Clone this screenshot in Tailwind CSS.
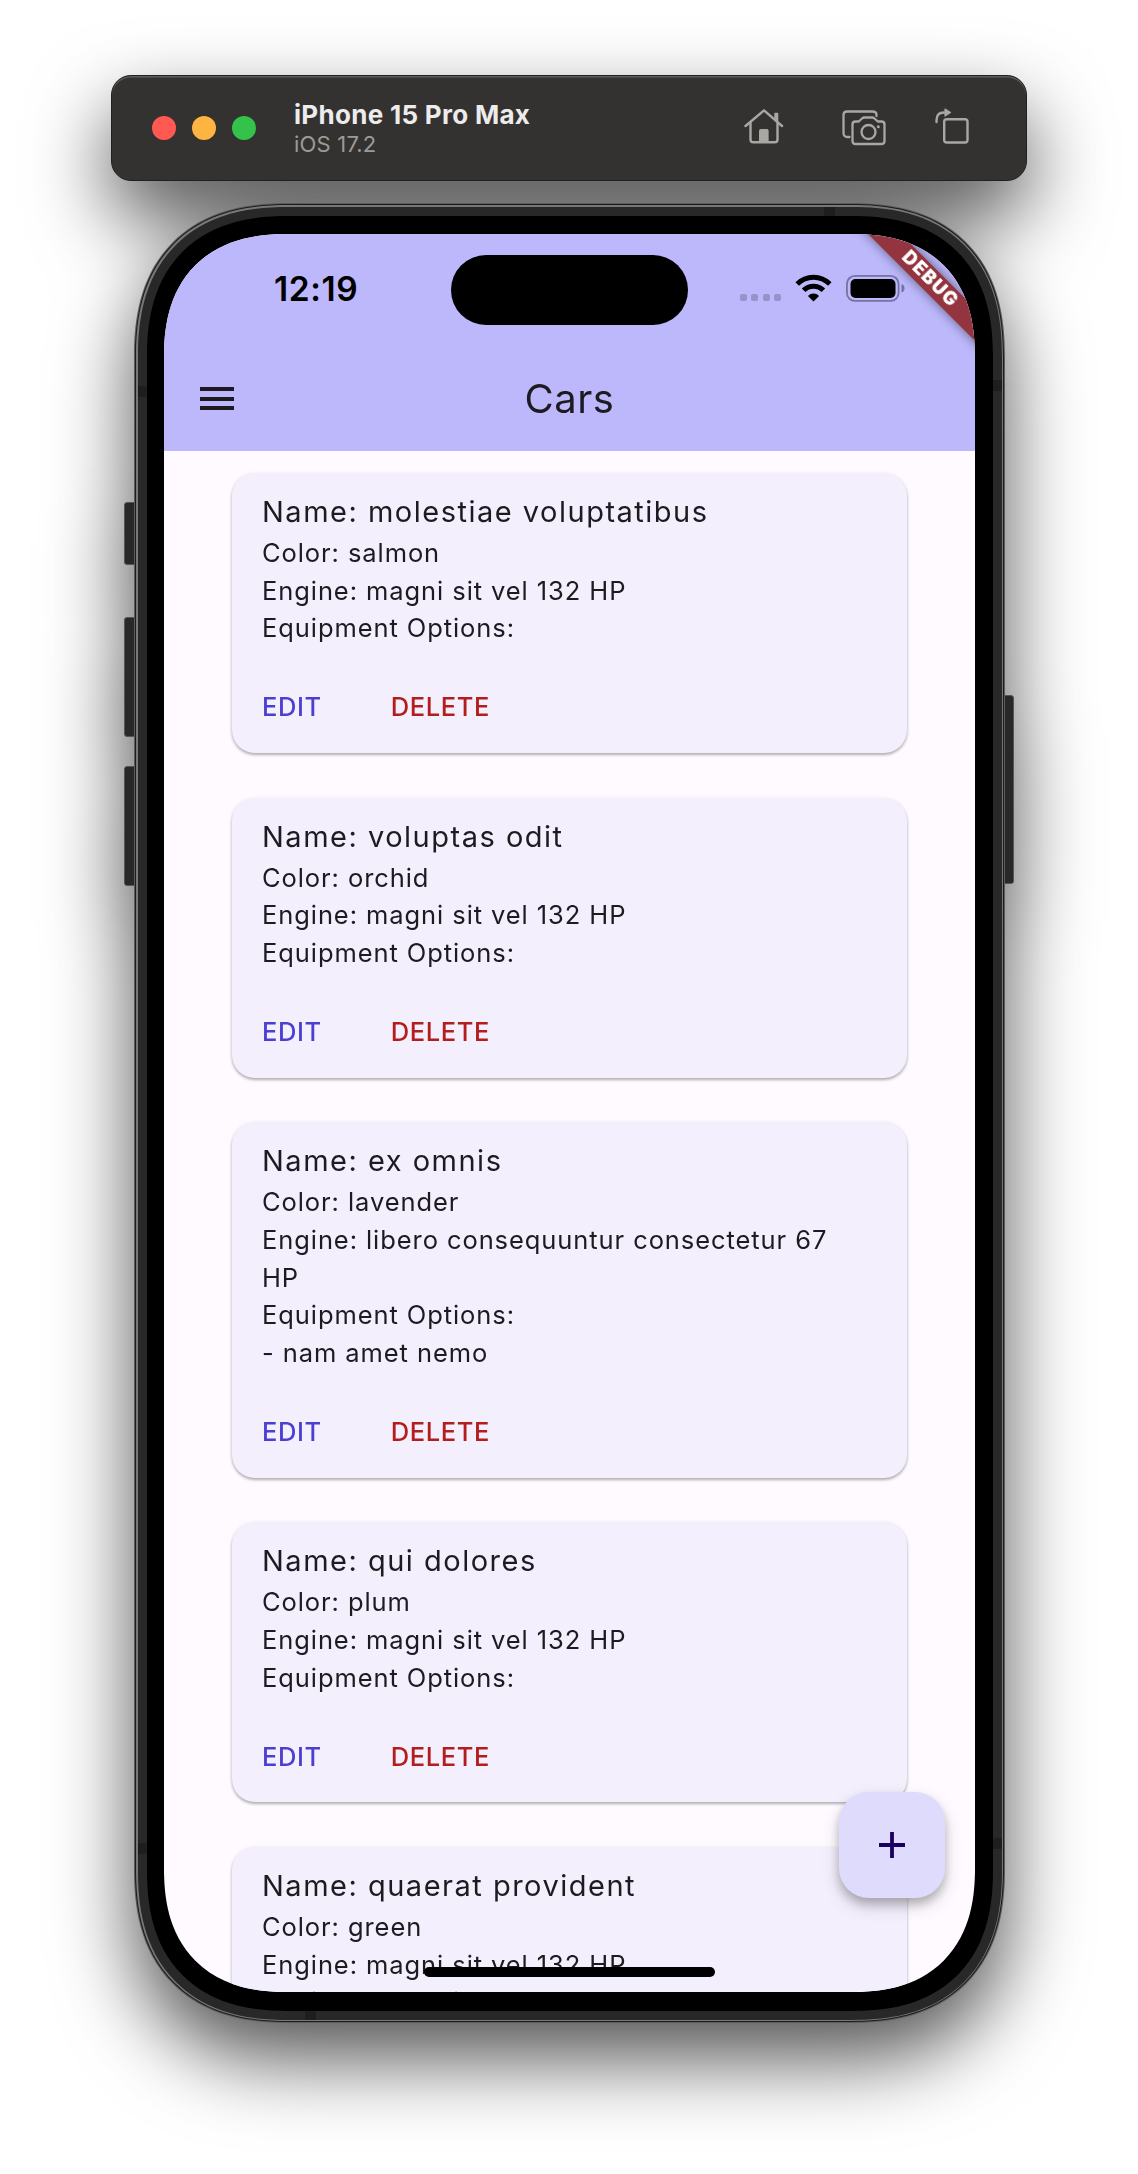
<!DOCTYPE html>
<html lang="en">
<head>
<meta charset="utf-8">
<title>Cars</title>
<script src="https://cdn.jsdelivr.net/npm/@tailwindcss/browser@4"></script>
</head>
<body class="bg-white font-['Inter',sans-serif] overflow-hidden">
<div class="flex h-[2174px] w-[1138px] flex-col items-center pt-[75px] drop-shadow-[0_36px_40px_rgba(0,0,0,0.67)]">
  <!-- Simulator toolbar -->
  <header class="flex h-[106px] w-[916px] shrink-0 items-center rounded-[20px] border border-[#20201f] bg-[#343230] pl-10 pr-[56px] shadow-[inset_0_1.5px_0_#5e5d5b]">
    <div class="flex gap-4">
      <span class="size-6 rounded-full bg-[#ff5951]"></span>
      <span class="size-6 rounded-full bg-[#fdb441]"></span>
      <span class="size-6 rounded-full bg-[#34c34a]"></span>
    </div>
    <div class="ml-[38px] mt-px">
      <div class="text-[26px] leading-[30px] font-bold tracking-[0.3px] text-[#ececec]">iPhone 15 Pro Max</div>
      <div class="text-[22px] leading-[28px] tracking-[0.2px] text-[#9c9a98]">iOS 17.2</div>
    </div>
    <div class="ml-auto flex -translate-y-px items-center text-[#a9a7a4]">
      <svg class="h-10 w-10" viewBox="0 0 40 40" fill="none" stroke="currentColor" stroke-width="2.4" stroke-linecap="round" stroke-linejoin="round"><path d="M1.5 19 20 3.4 38 19"/><path d="M6.5 16v16.5q0 2.8 2.8 2.8h21.4q2.8 0 2.8-2.8V16"/><path d="M31 6.5h2.6v8L31 12.4z" fill="currentColor" stroke-width="1.4"/><path d="M15.5 34.500V23.500q0-1 1-1h6.600q1 0 1 1V34.500z" fill="currentColor" stroke-width="1"/></svg>
      <svg class="ml-[58px] h-10 w-11" viewBox="0 0 44 40" fill="none" stroke="currentColor" stroke-width="2.300" stroke-linecap="round" stroke-linejoin="round"><path d="M7.500 30H5.500Q1.500 30 1.500 26V8Q1.500 4.500 5 4.500H30.500Q34.500 4.500 34.500 8V9"/><path d="M13.500 14.500h3.200l3.300-3q1-1 2.500-1h7.500q1.500 0 2.500 1l3.300 3h3.700q3 0 3 3v16.500q0 3-3 3h-26q-3 0-3-3V17.500q0-3 3-3z"/><circle cx="26.500" cy="25" r="7"/><circle cx="36.300" cy="19.800" r="1.500" fill="currentColor" stroke="none"/></svg>
      <svg class="ml-[48px] h-10 w-9" viewBox="0 0 36 40" fill="none" stroke="currentColor" stroke-width="2.400" stroke-linecap="round" stroke-linejoin="round"><rect x="10.200" y="12.200" width="23.300" height="23.300" rx="2.500"/><path d="M2.500 15v-1.500Q2.500 5.500 10 5.500"/><path d="M11 2l5.500 3.500L11 9z" fill="currentColor" stroke-width="1.200"/></svg>
    </div>
  </header>

  <!-- Phone body -->
  <div class="relative mt-[22px] h-[1820px] w-[871px] shrink-0 ml-px">
    <!-- side buttons -->
    <div class="absolute -left-[10px] top-[299px] h-[63px] w-3 rounded-l-[3px] border border-[#555] bg-[#282828]"></div>
    <div class="absolute -left-[10px] top-[414px] h-[120px] w-3 rounded-l-[3px] border border-[#555] bg-[#282828]"></div>
    <div class="absolute -left-[10px] top-[563px] h-[120px] w-3 rounded-l-[3px] border border-[#555] bg-[#282828]"></div>
    <div class="absolute -right-[9px] top-[492px] h-[189px] w-3 rounded-r-[3px] border border-[#555] bg-[#282828]"></div>

    <div class="relative size-full overflow-hidden rounded-[134px] [corner-shape:superellipse(1.25)] supports-[corner-shape:squircle]:rounded-[154px] bg-[#5c5c5c] p-px">
      <div class="size-full rounded-[133px] [corner-shape:superellipse(1.25)] supports-[corner-shape:squircle]:rounded-[153px] bg-[#1c1c1c] p-px">
        <div class="size-full rounded-[132px] [corner-shape:superellipse(1.25)] supports-[corner-shape:squircle]:rounded-[152px] bg-[#777] p-[1.5px]">
          <div class="relative size-full overflow-hidden rounded-[130px] [corner-shape:superellipse(1.25)] supports-[corner-shape:squircle]:rounded-[150px] bg-[#282828] p-[9px]">
            <!-- antenna bands -->
            <i class="absolute left-0 top-[179px] h-[11px] w-[9px] bg-[#1e1e1e]"></i>
            <i class="absolute right-0 top-[173px] h-[11px] w-[9px] bg-[#1e1e1e]"></i>
            <i class="absolute left-0 top-[1636px] h-[11px] w-[9px] bg-[#1e1e1e]"></i>
            <i class="absolute right-0 top-[1631px] h-[11px] w-[9px] bg-[#1e1e1e]"></i>
            <i class="absolute left-[686px] top-0 h-[9px] w-[11px] bg-[#1e1e1e]"></i>
            <i class="absolute left-[167px] bottom-0 h-[9px] w-[11px] bg-[#1e1e1e]"></i>
            <div class="flex size-full justify-center rounded-[121px] [corner-shape:superellipse(1.25)] supports-[corner-shape:squircle]:rounded-[141px] bg-black pt-[18.500px]">
              <!-- Screen -->
              <main class="relative flex h-[1758px] w-[811px] flex-col overflow-hidden rounded-[104px] [corner-shape:superellipse(1.25)] supports-[corner-shape:squircle]:rounded-[124px] bg-[#fefaff] text-[#1d1b20]">
                <div class="relative h-[217px] shrink-0 bg-[#bcb8fb]">
                  <div class="flex h-[112px] items-start">
                    <div class="ml-[110px] mt-[35px] text-[33.500px] leading-[40px] font-semibold tracking-[0.6px] text-black">12:19</div>
                    <div class="absolute left-[287px] top-[21px] h-[70px] w-[237px] rounded-full bg-black"></div>
                    <div class="ml-auto mr-[70px] mt-[40px] flex">
                      <div class="mt-[20px] flex gap-[4.300px]">
                        <span class="size-[7px] rounded-[2px] bg-[#9793ca]"></span><span class="size-[7px] rounded-[2px] bg-[#9793ca]"></span><span class="size-[7px] rounded-[2px] bg-[#9793ca]"></span><span class="size-[7px] rounded-[2px] bg-[#9793ca]"></span>
                      </div>
                      <svg class="ml-[14px] h-[28px] w-[37px]" viewBox="0 0 37 28"><g fill="none" stroke="#000" stroke-width="5"><path d="M2.200 9.900A23 23 0 0 1 34.800 9.900"/><path d="M8.600 16.300A14 14 0 0 1 28.400 16.300"/></g><path d="M18.500 27.500l-5.600-5.600a8 8 0 0 1 11.200 0z"/></svg>
                      <svg class="ml-[14px] h-[28px] w-[59px]" viewBox="0 0 59 28"><rect x=".9" y="1.900" width="51.700" height="25" rx="8" fill="none" stroke="#7571a1" stroke-width="1.800"/><rect x="4.500" y="5" width="45" height="19" rx="5"/><path d="M55.500 10q3 1 3 4.300t-3 4.300z" fill="#7571a1"/></svg>
                    </div>
                  </div>
                  <div class="flex h-[105px] items-center px-[35.500px]">
                    <div class="flex w-[34px] flex-col gap-[5.500px]"><span class="h-[4px] bg-[#1d1b20]"></span><span class="h-[4px] bg-[#1d1b20]"></span><span class="h-[4px] bg-[#1d1b20]"></span></div>
                    <h1 class="grow pr-[34px] text-center text-[40px] leading-[52px] tracking-[0.5px]">Cars</h1>
                  </div>
                  <!-- Debug ribbon -->
                  <div class="absolute left-[646px] top-[34px] flex h-[22.600px] w-[240px] rotate-45 items-center justify-center bg-[#94343f] text-[18.500px] font-black tracking-[1.3px] text-white shadow-[0_0_11px_rgba(0,0,0,0.5)]">DEBUG</div>
                </div>

                <div id="cars" class="flex flex-col gap-[44.500px] px-[68px] pt-[22px]"></div>

                <button class="absolute left-[675px] top-[1557.500px] flex size-[106px] items-center justify-center rounded-[30px] bg-[#dfdbfd] shadow-[0_6px_10px_rgba(0,0,0,0.2),0_8px_18px_rgba(0,0,0,0.16)]">
                  <svg class="size-[26px]" viewBox="0 0 26 26" stroke="#1b0060" stroke-width="3.800"><path d="M13 0v26M0 13h26"/></svg>
                </button>
                <div class="absolute left-[260px] top-[1733px] h-[10px] w-[291px] rounded-full bg-black"></div>
              </main>
            </div>
          </div>
        </div>
      </div>
    </div>
  </div>
</div>

<script>
const cars = [
  {name: 'molestiae voluptatibus', color: 'salmon', engine: 'magni sit vel 132 HP', options: []},
  {name: 'voluptas odit', color: 'orchid', engine: 'magni sit vel 132 HP', options: []},
  {name: 'ex omnis', color: 'lavender', engine: 'libero consequuntur consectetur 67 HP', options: ['nam amet nemo']},
  {name: 'qui dolores', color: 'plum', engine: 'magni sit vel 132 HP', options: []},
  {name: 'quaerat provident', color: 'green', engine: 'magni sit vel 132 HP', options: []},
];
document.getElementById('cars').innerHTML = cars.map(c => `
  <article class="shrink-0 rounded-[23px] bg-[#f3effd] pl-[30px] pr-[46px] pt-[16px] pb-[22.500px] shadow-[0_2px_3px_rgba(0,0,0,0.26),0_1px_4px_rgba(0,0,0,0.1)]">
    <h2 class="text-[29px] leading-[45px] tracking-[1.5px]">Name: ${c.name}</h2>
    <div class="text-[25.500px] leading-[37.700px] tracking-[0.920px]">
      <p>Color: ${c.color}</p><p>Engine: ${c.engine}</p><p>Equipment Options:</p>${c.options.map(o => `<p>- ${o}</p>`).join('')}
    </div>
    <div class="mt-[37.500px] flex h-[46px] items-center gap-[69px] text-[25.500px] font-medium tracking-[0.6px]">
      <button class="text-[#4a3fd1]">EDIT</button><button class="text-[#b31d1d]">DELETE</button>
    </div>
  </article>`).join('');
</script>
</body>
</html>
